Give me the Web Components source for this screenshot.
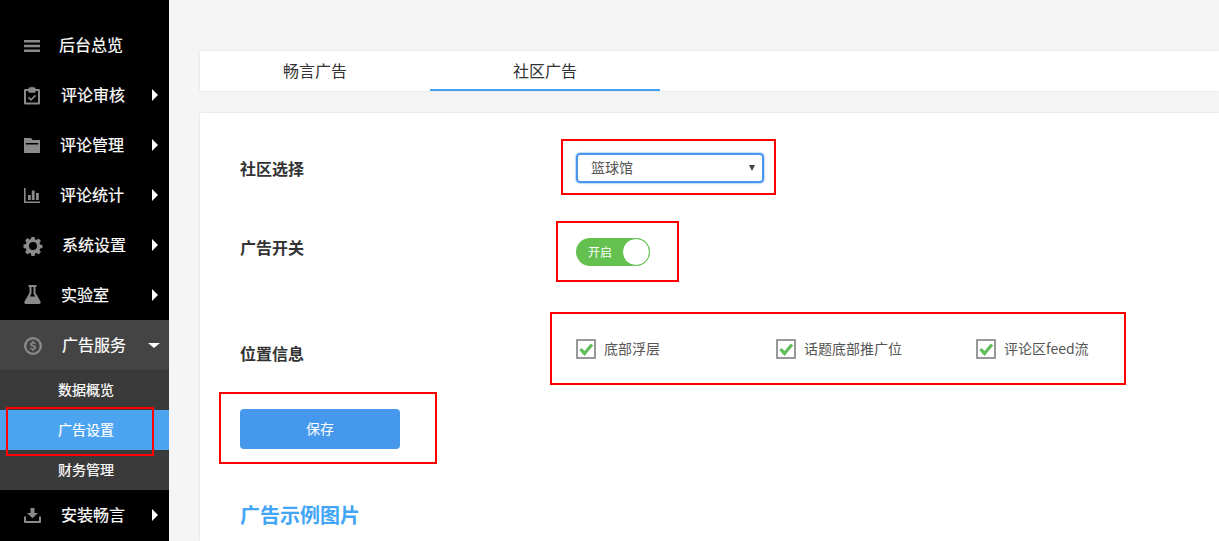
<!DOCTYPE html>
<html lang="zh">
<head>
<meta charset="utf-8">
<title>广告设置</title>
<style>
    html, body {
        margin: 0;
        height: 541px;
        overflow: hidden;
        background: #f5f5f5;
        font-family: "Noto Sans CJK SC", "Liberation Sans", sans-serif;
    }
</style>
</head>
<body>

<admin-page>
    <side-menu slot="side">
        <menu-item icon="menu" text-x="59">后台总览</menu-item>
        <menu-item icon="check" text-x="61" arrow="right">评论审核</menu-item>
        <menu-item icon="folder" text-x="60" arrow="right">评论管理</menu-item>
        <menu-item icon="chart" text-x="60" arrow="right">评论统计</menu-item>
        <menu-item icon="gear" text-x="62" arrow="right">系统设置</menu-item>
        <menu-item icon="flask" text-x="61" arrow="right">实验室</menu-item>
        <menu-item icon="dollar" text-x="62" arrow="down" open>广告服务</menu-item>
        <sub-item>数据概览</sub-item>
        <sub-item active>广告设置<red-box style="left:6px;top:-3px;width:144px;height:45px"></red-box></sub-item>
        <sub-item>财务管理</sub-item>
        <menu-item icon="install" text-x="61" arrow="right">安装畅言</menu-item>
    </side-menu>

    <tab-bar>
        <tab-item>畅言广告</tab-item>
        <tab-item active>社区广告</tab-item>
    </tab-bar>

    <form-panel>
        <form-row label="社区选择" label-top="3" height="70">
            <select-box>篮球馆<red-box style="left:-17px;top:-16px;width:211px;height:52px"></red-box></select-box>
        </form-row>
        <form-row label="广告开关" label-top="12" height="116" content-top="15">
            <toggle-switch>开启<red-box style="left:-20px;top:-17px;width:119px;height:57px"></red-box></toggle-switch>
        </form-row>
        <form-row label="位置信息" label-top="2" height="70">
            <check-group>
                <check-option>底部浮层</check-option>
                <check-option>话题底部推广位</check-option>
                <check-option>评论区feed流</check-option>
                <red-box style="left:-26px;top:-27px;width:572px;height:69px"></red-box>
            </check-group>
        </form-row>
        <save-button>保存<red-box style="left:-21px;top:-17px;width:214px;height:68px"></red-box></save-button>
        <section-title>广告示例图片</section-title>
    </form-panel>
</admin-page>

<script>
const ICONS = {
    menu: '<path d="M0 4h16v2.4H0zM0 8.8h16v2.4H0zM0 13.6h16V16H0z"/>',
    check: '<path fill-rule="evenodd" d="M4.5 1.5h2a1.8 1.8 0 0 1 3 0h2v1.6h3.3a1.2 1.2 0 0 1 1.2 1.2v13a1.2 1.2 0 0 1-1.2 1.2H1.2A1.2 1.2 0 0 1 0 17.300v-13a1.2 1.2 0 0 1 1.200-1.200h3.300zM2 5v11.500h12V5h-2.500v1.800h-7V5z"/><path d="M7 15 3.900 11.900l1.100-1.100 2 2 4-4 1.100 1.100z"/>',
    folder: '<path fill-rule="evenodd" d="M0 2h7l1.500 2H16v13H0zM1.800 7v1.500h12.400V7z"/>',
    chart: '<path d="M0 2h1.600v13.400H16V17H0z"/><path d="M4 9h2.800v5H4zM7.800 4.500h2.800V14H7.800zM12 7h2.800v7H12z"/>',
    gear: '<path transform="translate(0 1)" fill-rule="evenodd" d="M7.400 0h3.200l.5 2.400 1.500.6 2-1.400 2.300 2.300-1.400 2 .6 1.500 2.400.5v3.200l-2.400.5-.6 1.500 1.400 2-2.300 2.300-2-1.400-1.500.6-.5 2.400H7.400l-.5-2.400-1.500-.6-2 1.400-2.300-2.300 1.400-2-.6-1.500-2.400-.5V7.400l2.400-.5.6-1.500-1.400-2 2.300-2.300 2 1.400 1.500-.6zM9 5a4 4 0 1 0 0 8 4 4 0 0 0 0-8z"/>',
    flask: '<path fill-rule="evenodd" d="M4.500-1h8v2h-1v5.800l5 8.800a1.600 1.600 0 0 1-1.400 2.400H1.900a1.600 1.600 0 0 1-1.400-2.400l5-8.800V1h-1zM7.500 1v6.400L5.800 10.500h5.400L9.500 7.400V1z"/>',
    dollar: '<path transform="translate(0 1)" fill-rule="evenodd" d="M9 0a9 9 0 1 1 0 18A9 9 0 0 1 9 0zm0 2.300a6.700 6.700 0 1 0 0 13.400A6.700 6.700 0 0 0 9 2.300z"/><path transform="translate(0 1)" d="M8.300 4h1.400v1.200c.9.100 1.700.5 2.200 1.100l-1 1c-.5-.5-1-.8-1.800-.8-.7 0-1.100.3-1.100.7 0 .5.500.7 1.500 1 1.400.4 2.600.9 2.600 2.300 0 1.100-.8 1.900-2.400 2.100V14H8.300v-1.300c-1-.1-1.900-.6-2.500-1.300l1-1c.6.600 1.300 1 2.100 1 .8 0 1.300-.3 1.300-.8 0-.5-.5-.8-1.500-1.100-1.300-.4-2.500-.8-2.500-2.200 0-1.100.8-1.900 2.100-2.100z"/>',
    install: '<path d="M6.500 2h4v5H14L8.500 12.200 3 7h3.500z"/><path d="M0 10.500h2v4.500h13v-4.500h2V16a1 1 0 0 1-1 1H1a1 1 0 0 1-1-1z"/>'
};

class AdminPage extends HTMLElement {
    constructor() {
        super();
        this.attachShadow({ mode: 'open' }).innerHTML = `
            <style>
                :host { display: flex; height: 541px; overflow: hidden; }
                .side { flex: 0 0 169px; }
                .main {
                    flex: 1;
                    min-width: 0;
                    padding: 51px 0 0 31px;
                    display: flex;
                    flex-direction: column;
                    gap: 22px;
                }
            </style>
            <div class="side"><slot name="side"></slot></div>
            <div class="main"><slot></slot></div>`;
    }
}

class SideMenu extends HTMLElement {
    constructor() {
        super();
        this.attachShadow({ mode: 'open' }).innerHTML = `
            <style>
                :host { display: block; height: 541px; padding-top: 20px; box-sizing: border-box; background: #000; }
            </style>
            <slot></slot>`;
    }
}

class MenuItem extends HTMLElement {
    constructor() {
        super();
        const textX = this.getAttribute('text-x');
        const arrow = this.getAttribute('arrow');
        const icon = ICONS[this.getAttribute('icon')];
        let arrowMark = '';
        if (arrow === 'right') {
            arrowMark = '<svg class="arrow" style="left:152px;top:19px" width="6" height="12" viewBox="0 0 6 12"><path d="M0 0l6 6-6 6z"/></svg>';
        } else if (arrow === 'down') {
            arrowMark = '<svg class="arrow" style="left:148px;top:23px" width="12" height="5" viewBox="0 0 12 5"><path d="M0 0h12L6 5z"/></svg>';
        }
        this.attachShadow({ mode: 'open' }).innerHTML = `
            <style>
                :host {
                    display: flex;
                    align-items: center;
                    position: relative;
                    height: 50px;
                    color: #fff;
                    font-size: 16px;
                    -webkit-text-stroke: 0.2px #fff;
                }
                :host([open]) { background: #444; }
                .icon { flex: 0 0 auto; margin-left: 24px; width: calc(${textX}px - 24px); }
                .icon svg { display: block; fill: #8a8a8a; overflow: visible; }
                .label { padding-bottom: 2px; }
                .arrow { position: absolute; fill: #fff; }
            </style>
            <span class="icon"><svg width="18" height="18" viewBox="0 0 18 18">${icon}</svg></span>
            <span class="label"><slot></slot></span>
            ${arrowMark}`;
    }
}

class SubItem extends HTMLElement {
    constructor() {
        super();
        this.attachShadow({ mode: 'open' }).innerHTML = `
            <style>
                :host {
                    display: flex;
                    align-items: center;
                    position: relative;
                    height: 40px;
                    padding-left: 58px;
                    background: #3a3a3a;
                    color: #fff;
                    font-size: 14px;
                    -webkit-text-stroke: 0.2px #fff;
                }
                :host([active]) { background: #4ca4f0; }
                .label { padding-bottom: 2px; }
            </style>
            <span class="label"><slot></slot></span>`;
    }
}

class TabBar extends HTMLElement {
    constructor() {
        super();
        this.attachShadow({ mode: 'open' }).innerHTML = `
            <style>
                :host {
                    display: flex;
                    height: 40px;
                    background: #fff;
                    box-shadow: 0 0 2px rgba(0, 0, 0, 0.12);
                }
            </style>
            <slot></slot>`;
    }
}

class TabItem extends HTMLElement {
    constructor() {
        super();
        this.attachShadow({ mode: 'open' }).innerHTML = `
            <style>
                :host {
                    display: flex;
                    align-items: center;
                    justify-content: center;
                    flex: 0 0 230px;
                    box-sizing: border-box;
                    font-size: 16px;
                    color: #333;
                    border-bottom: 2px solid transparent;
                }
                :host([active]) { border-bottom-color: #42a0f5; }
            </style>
            <slot></slot>`;
    }
}

class FormPanel extends HTMLElement {
    constructor() {
        super();
        this.attachShadow({ mode: 'open' }).innerHTML = `
            <style>
                :host {
                    display: block;
                    flex: 1;
                    padding: 40px 0 0 40px;
                    background: #fff;
                    box-shadow: 0 0 2px rgba(0, 0, 0, 0.12);
                }
            </style>
            <slot></slot>`;
    }
}

class FormRow extends HTMLElement {
    constructor() {
        super();
        const labelTop = this.getAttribute('label-top') || 0;
        const contentTop = this.getAttribute('content-top') || 0;
        this.attachShadow({ mode: 'open' }).innerHTML = `
            <style>
                :host {
                    display: grid;
                    grid-template-columns: 336px 1fr;
                    height: ${this.getAttribute('height')}px;
                }
                .label {
                    font-size: 16px;
                    font-weight: bold;
                    color: #333;
                    line-height: 24px;
                    margin-top: ${labelTop}px;
                }
                .content { margin-top: ${contentTop}px; }
            </style>
            <div class="label">${this.getAttribute('label')}</div>
            <div class="content"><slot></slot></div>`;
    }
}

class SelectBox extends HTMLElement {
    constructor() {
        super();
        this.attachShadow({ mode: 'open' }).innerHTML = `
            <style>
                :host {
                    display: flex;
                    align-items: center;
                    position: relative;
                    box-sizing: border-box;
                    width: 188px;
                    height: 30px;
                    padding: 0 0 2px 13px;
                    border: 2px solid #4a98ee;
                    border-radius: 4px;
                    box-shadow: 0 0 1px 1px rgba(74, 152, 238, 0.35);
                    font-size: 14px;
                    color: #555;
                }
                .caret { position: absolute; right: 7px; top: 10px; }
            </style>
            <slot></slot>
            <svg class="caret" width="6" height="6" viewBox="0 0 6 6"><path d="M0 0h6L3 6z" fill="#444"/></svg>`;
    }
}

class ToggleSwitch extends HTMLElement {
    constructor() {
        super();
        this.attachShadow({ mode: 'open' }).innerHTML = `
            <style>
                :host {
                    display: flex;
                    align-items: center;
                    position: relative;
                    box-sizing: border-box;
                    width: 74px;
                    height: 28px;
                    padding: 0 0 2px 12px;
                    border-radius: 14px;
                    background: #64c14f;
                    font-size: 12px;
                    color: #fff;
                }
                .knob {
                    position: absolute;
                    right: 0;
                    top: 0;
                    box-sizing: border-box;
                    width: 28px;
                    height: 28px;
                    border-radius: 50%;
                    border: 1px solid #64c14f;
                    background: #fff;
                }
            </style>
            <slot></slot>
            <span class="knob"></span>`;
    }
}

class CheckGroup extends HTMLElement {
    constructor() {
        super();
        this.attachShadow({ mode: 'open' }).innerHTML = `
            <style>
                :host { display: flex; position: relative; }
            </style>
            <slot></slot>`;
    }
}

class CheckOption extends HTMLElement {
    constructor() {
        super();
        this.attachShadow({ mode: 'open' }).innerHTML = `
            <style>
                :host {
                    display: flex;
                    align-items: center;
                    gap: 8px;
                    flex: 0 0 200px;
                    height: 20px;
                    font-size: 14px;
                    color: #555;
                }
                .box {
                    box-sizing: border-box;
                    flex: 0 0 20px;
                    height: 20px;
                    border: 2px solid #999;
                    background: #fff;
                }
                .box svg { display: block; overflow: visible; }
                .label { padding-bottom: 2px; }
            </style>
            <span class="box"><svg width="16" height="16" viewBox="0 0 16 16"><path d="M2.500 8 6.500 12.500 14 3.500" fill="none" stroke="#62bd5a" stroke-width="3.200"/></svg></span>
            <span class="label"><slot></slot></span>`;
    }
}

class SaveButton extends HTMLElement {
    constructor() {
        super();
        this.attachShadow({ mode: 'open' }).innerHTML = `
            <style>
                :host {
                    display: flex;
                    align-items: center;
                    justify-content: center;
                    position: relative;
                    box-sizing: border-box;
                    width: 160px;
                    height: 40px;
                    padding-bottom: 2px;
                    border-radius: 4px;
                    background: #4598ec;
                    color: #fff;
                    font-size: 14px;
                }
            </style>
            <slot></slot>`;
    }
}

class SectionTitle extends HTMLElement {
    constructor() {
        super();
        this.attachShadow({ mode: 'open' }).innerHTML = `
            <style>
                :host {
                    display: block;
                    margin-top: 51px;
                    font-size: 20px;
                    line-height: 30px;
                    font-weight: bold;
                    color: #42a5f5;
                }
            </style>
            <slot></slot>`;
    }
}

class RedBox extends HTMLElement {
    constructor() {
        super();
        this.attachShadow({ mode: 'open' }).innerHTML = `
            <style>
                :host {
                    display: block;
                    position: absolute;
                    z-index: 5;
                    border: 2px solid #f00;
                    pointer-events: none;
                }
            </style>`;
    }
}

customElements.define('admin-page', AdminPage);
customElements.define('side-menu', SideMenu);
customElements.define('menu-item', MenuItem);
customElements.define('sub-item', SubItem);
customElements.define('tab-bar', TabBar);
customElements.define('tab-item', TabItem);
customElements.define('form-panel', FormPanel);
customElements.define('form-row', FormRow);
customElements.define('select-box', SelectBox);
customElements.define('toggle-switch', ToggleSwitch);
customElements.define('check-group', CheckGroup);
customElements.define('check-option', CheckOption);
customElements.define('save-button', SaveButton);
customElements.define('section-title', SectionTitle);
customElements.define('red-box', RedBox);
</script>
</body>
</html>
